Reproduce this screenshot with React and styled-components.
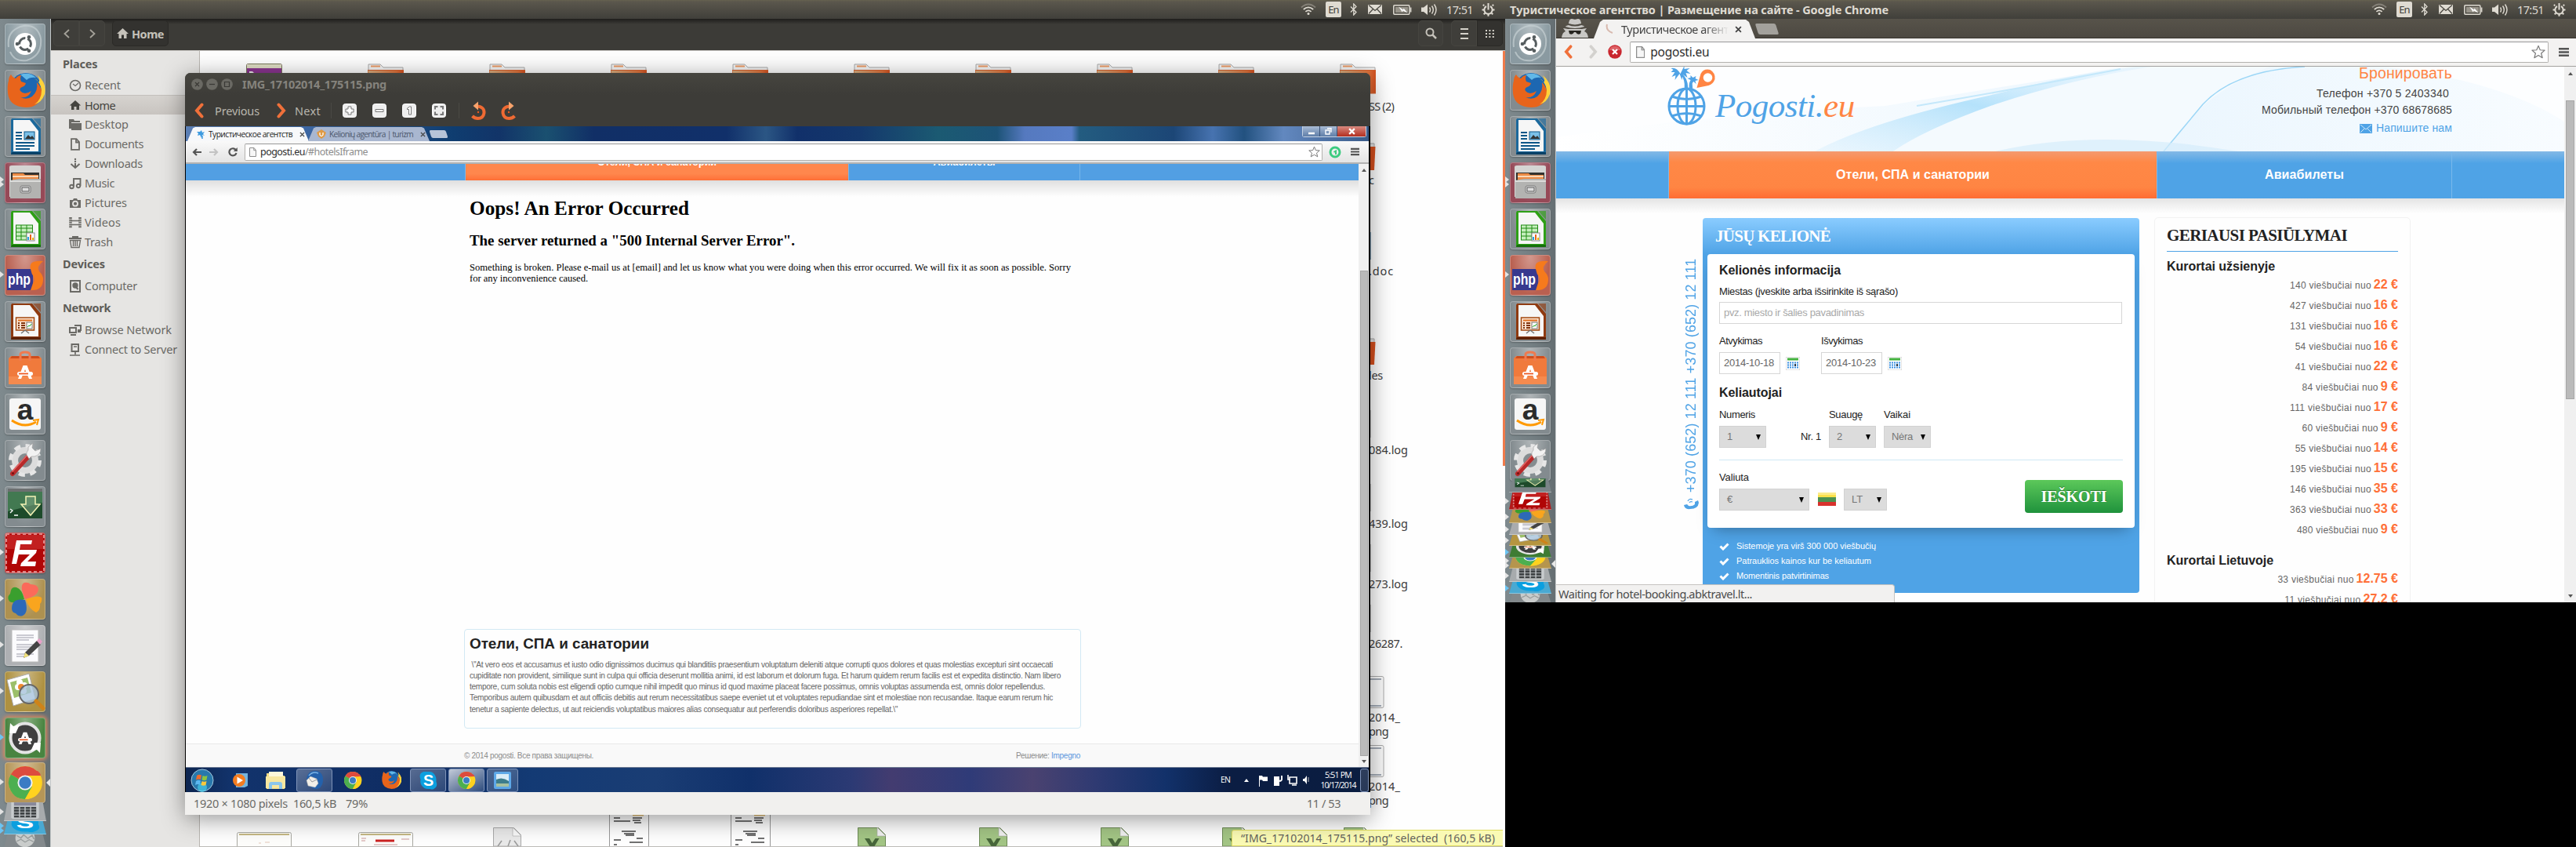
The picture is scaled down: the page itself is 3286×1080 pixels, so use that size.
import React, { useLayoutEffect, useRef, useState } from "react";
import styled, { createGlobalStyle, css } from "styled-components";

const UI = `"Noto Sans", "Open Sans", sans-serif`;
const ARIAL = `"Liberation Sans", Arial, sans-serif`;
const TIMES = `"Liberation Serif", "Times New Roman", serif`;
const BLUE = "#4fa3e6";
const ORANGE = "#ff8543";

const Global = createGlobalStyle`
  * { box-sizing: border-box; }
  body { margin: 0; background: #000; overflow: hidden; font-family: ${UI}; }
  svg { display: block; flex: none; }
  h1, h2, h3, p { margin: 0; }
`;

/* Tracks a line of text so that it takes exactly the given width. */
const FitSpan = styled.span`
  display: inline-block;
  flex: none;
  white-space: pre;
`;
function Fit({ w, children }) {
  const ref = useRef(null);
  const [track, setTrack] = useState(0);
  useLayoutEffect(() => {
    const el = ref.current;
    const n = el.textContent.length;
    setTrack((w - el.getBoundingClientRect().width) / n);
  }, [w]);
  return <FitSpan ref={ref} style={{ letterSpacing: `${track}px` }}>{children}</FitSpan>;
}

/* ---------- desktop ---------- */
const Desktop = styled.div`
  display: flex;
  align-items: flex-start;
  width: 3286px;
  height: 1080px;
  background: #000;
  overflow: hidden;
`;
const Monitor = styled.section`
  position: relative;
  display: flex;
  flex-direction: column;
  flex: none;
  width: ${(p) => p.$w}px;
  height: ${(p) => p.$h}px;
  overflow: hidden;
  background: #6d777a;
`;
const MonitorBody = styled.div`
  display: flex;
  flex: 1;
  min-height: 0;
`;
const Panel = styled.header`
  display: flex;
  align-items: center;
  justify-content: space-between;
  height: 24px;
  flex: none;
  padding: 0 7px 0 6px;
  background: linear-gradient(#66624f 0, #5b574d 2px, #403f3a 100%);
  color: #dfdbd2;
`;
const PanelTitle = styled.div`
  font: bold 14.5px/24px ${UI};
`;
const Tray = styled.div`
  position: relative;
  display: flex;
  align-items: center;
  height: 24px;
  font: 14.5px/24px ${UI};
`;
const Slot = styled.span`
  display: flex;
  flex: none;
  justify-content: center;
  width: ${(p) => p.$w}px;
`;
const Lang = styled.span`
  width: 20px;
  height: 20px;
  border-radius: 2px;
  background: #dfdbd2;
  color: #3f3e39;
  font: 13px/20px ${UI};
  letter-spacing: -0.8px;
  text-align: center;
`;

function PanelTray() {
  return (
    <Tray>
      <Slot $w={28}>
        <svg width="20" height="16" viewBox="0 0 20 16" fill="none" stroke="#dfdbd2" strokeWidth="1.7">
          <path d="M1 5.5q9-8 18 0" opacity=".35" />
          <path d="M3.8 8q6.2-5.4 12.4 0" /><path d="M6.4 10.8q3.6-3 7.2 0" />
          <circle cx="10" cy="13.6" r="1.5" fill="#dfdbd2" stroke="none" />
        </svg>
      </Slot>
      <Slot $w={36}><Lang>En</Lang></Slot>
      <Slot $w={16}>
        <svg width="10" height="16" viewBox="0 0 10 16" fill="none" stroke="#dfdbd2" strokeWidth="1.3"><path d="M1 4.5l7 7L4.8 15V1L8 4.4 1 11.5" /></svg>
      </Slot>
      <Slot $w={38}>
        <svg width="18" height="12" viewBox="0 0 18 12"><path d="M0 0h18v12H0z" fill="#dfdbd2" /><path d="M1 .5l8 7 8-7M1 11.5l5.5-6M17 11.5l-5.5-6" fill="none" stroke="#47453f" strokeWidth="1.2" /></svg>
      </Slot>
      <Slot $w={32}>
        <svg width="24" height="13" viewBox="0 0 24 13"><rect x=".8" y=".8" width="20" height="11.4" rx="1" fill="none" stroke="#dfdbd2" strokeWidth="1.5" /><path d="M22.6 3.5v6" stroke="#dfdbd2" strokeWidth="1.6" /><path d="M3 3h16v7H3z" fill="#98948a" /><path d="M7 2.5l6 4 .5-2 5 6-6-3-.6 2z" fill="#fff" /></svg>
      </Slot>
      <Slot $w={36}>
        <svg width="20" height="17" viewBox="0 0 20 17"><path d="M0 5.5h3l5-4v13.500l-5-4H0z" fill="#dfdbd2" /><path d="M10.500 5.500q2 3 0 6M13.500 3.500q3.600 5 0 10M16.500 1.500q5 7 0 14" fill="none" stroke="#dfdbd2" strokeWidth="1.4" /></svg>
      </Slot>
      <Slot $w={42}><Fit w={34}>17:51</Fit></Slot>
      <Slot $w={30}>
        <svg width="17" height="17" viewBox="0 0 17 17" fill="none" stroke="#dfdbd2"><path d="M6 4a5.200 5.200 0 1 0 5 0" strokeWidth="2" /><path d="M8.500 0v8.500" strokeWidth="2" /><path d="M3.300 3.300L1.800 1.900M13.700 3.300l1.500-1.400M3 8.500H.5M14 8.500h2.500M4.300 12.700l-1.600 1.600M12.700 12.700l1.600 1.600M8.500 14v2.800" strokeWidth="2" /></svg>
      </Slot>
    </Tray>
  );
}

/* ---------- launcher ---------- */
const Dock = styled.nav`
  flex: none;
  width: 65px;
  padding-top: 6px;
  overflow: hidden;
  background: linear-gradient(90deg, #7f8a8e, #737e82 55%, #656e72);
  border-right: 1px solid #c3c7c8;
`;
const DockSlot = styled.div`
  position: relative;
  width: 64px;
  height: ${(p) => p.$h}px;
  padding-left: 6px;
`;
const Tile = styled.div`
  width: 52px;
  height: 52px;
  border-radius: 4px;
  border: 1px solid rgba(255, 255, 255, 0.28);
  background: radial-gradient(ellipse at 50% 0, rgba(255, 255, 255, 0.4), rgba(255, 255, 255, 0.06) 70%), ${(p) => p.$bg};
  box-shadow: ${(p) => (p.$glow ? "0 0 5px 2px #d9875c" : "0 1px 2px rgba(0,0,0,.25)")};
  svg { margin: -1px; }
`;
const Fold = styled.div`
  display: flex;
  align-items: flex-end;
  justify-content: center;
  width: 54px;
  margin-left: -1px;
  height: ${(p) => p.$h}px;
  overflow: hidden;
  background: ${(p) => p.$bg};
  clip-path: polygon(8% 0, 92% 0, 100% 100%, 0 100%);
  border-bottom: 1.500px solid rgba(255, 255, 255, 0.35);
`;
const Pip = styled.i`
  position: absolute;
  left: 0;
  top: ${(p) => p.$y}px;
  border: 4px solid transparent;
  border-right-width: 0;
  border-left: 5px solid ${(p) => p.$c || "#e4e4e4"};
`;
const Focus = styled.i`
  position: absolute;
  right: 0;
  top: ${(p) => p.$y}px;
  border: 5px solid transparent;
  border-left-width: 0;
  border-right-color: #e8e8e8;
`;

const docPage = (c, dark, inner) => (
  <>
    <path d="M9 3h26l11 13v33H8V5z" fill={c} />
    <path d="M36 3h10v11z" fill={c} opacity=".65" />
    <path d="M9 46h37v3H8z" fill={dark} />
    <path d="M11 5h21l11 14v26H11z" fill="#f6f6f6" />
    {inner}
  </>
);
const chromeArt = (
  <>
    <circle cx="26" cy="26" r="21" fill="#ffd21f" />
    <path d="M26 26L7.800 15.500A21 21 0 0 1 44.200 15.500z" fill="#dd4b3e" />
    <path d="M7.800 15.500A21 21 0 0 0 26 47l9-16-9-5z" fill="#4caf50" />
    <path d="M26 17h20q-1-4-4-6l-16 2z" fill="#dd4b3e" />
    <path d="M26 47a21 21 0 0 0 19.800-30H26l9.500 13z" fill="#ffd21f" />
    <circle cx="26" cy="26" r="9.600" fill="#f2f2f2" /><circle cx="26" cy="26" r="7.700" fill="#3b7cc4" />
  </>
);
const foxArt = (
  <>
    <circle cx="27" cy="24" r="20" fill="#1d67b1" />
    <path d="M20 6q12-4 20 4-8-1-12 3z" fill="#61b8e8" />
    <path d="M5 14q0-5 3-8 2 4 6 5 3-4 7-4-2 4 0 8l6 2q-1 4-5 5-4 2-2 5 5 6 14 0-4 10-14 8 8 4 15-1 8-7 6-18 8 8 6 18-4 14-20 14Q6 47 4 30 3 20 5 14z" fill="#e8641b" />
    <path d="M37 10q9 6 10 16 0 12-9 18 9-2 13-13 3-14-9-24 4 7 1 9-2-4-6-6z" fill="#ffd23a" />
  </>
);
const aLetter = (x, y, s) => (
  <g transform={`translate(${x} ${y}) scale(${s})`}>
    <path d="M-2.500-8h5L9 9H5L0-3-5 9h-4z" fill="#fff" />
    <rect x="-10" y="0" width="20" height="5" rx="2.500" fill="#fff" /><path d="M-8 1.600H4v1.800H-8z" fill="#ee5a24" />
  </g>
);
const skypeArt = (
  <>
    <path d="M14 5h14q10 0 15 10 3 6 2 14 5 12-6 18-4 2-9 0-14 2-21-9-4-6-2-14Q1 9 14 5z" fill="#0b9fdf" />
    <text x="26" y="39" fontFamily={ARIAL} fontWeight="bold" fontSize="38" fill="#fff" textAnchor="middle">S</text>
  </>
);

const ART = {
  dash: (
    <>
      <path d="M5 30Q2 8 24 3q18-2 22 16M46 19q2 22-18 28Q12 49 7 36" fill="none" stroke="#c6d0d3" strokeWidth="2" opacity=".7" />
      <circle cx="26" cy="26" r="14" fill="#fff" />
      <circle cx="26" cy="26" r="7.400" fill="none" stroke="#565d5f" strokeWidth="3" strokeDasharray="12.500 3" strokeDashoffset="-7" />
      <circle cx="16" cy="26" r="2.300" fill="#565d5f" /><circle cx="31" cy="17.300" r="2.300" fill="#565d5f" /><circle cx="31" cy="34.700" r="2.300" fill="#565d5f" />
    </>
  ),
  firefox: foxArt,
  writer: docPage("#1c699c", "#0a4166", (
    <>
      <path d="M14 21h8M14 25h8M14 29h8M14 34h24M14 38h24M14 42h18" stroke="#0d5788" strokeWidth="2" />
      <rect x="25" y="20" width="13" height="10" fill="#7bc0e8" stroke="#0d5788" /><path d="M26 29l4-5 3 3 2-2 3 4z" fill="#333" />
    </>
  )),
  files: (
    <>
      <path d="M6 6q0-2 3-2h34q3 0 3 2v38H6z" fill="#d5d5d3" /><path d="M8 13h36v12H8z" fill="#33322f" />
      <path d="M10 14h14l2 2h17v10H10z" fill="#ec8b45" /><path d="M10 18h33" stroke="#fff0dc" strokeWidth="1.500" />
      <path d="M7 23l11-2h28v25H7z" fill="#b3b3b1" /><path d="M7 23h39v2H7z" fill="#dcdcda" />
      <rect x="20" y="30" width="13" height="9" rx="2" fill="#e8e8e8" stroke="#777" /><rect x="22" y="32" width="9" height="5" fill="#ddd" stroke="#555" />
    </>
  ),
  calc: docPage("#2ea016", "#14700a", (
    <>
      <rect x="14.500" y="21" width="21" height="19" fill="#c6efbd" stroke="#1f8a12" /><path d="M14 25h22M14 30h22M14 35h22M21 21v19M28 21v19" stroke="#1f8a12" />
      <rect x="28" y="31" width="10" height="10" fill="#fff" stroke="#888" /><path d="M30 40v-4" stroke="#26a3e0" strokeWidth="2" /><path d="M33 40v-7" stroke="#e8641b" strokeWidth="2" /><path d="M36 40v-3" stroke="#f0b400" strokeWidth="2" />
    </>
  )),
  php: (
    <>
      <path d="M3 18h33v27H3z" fill="#38398e" />
      <text x="4" y="38" fontFamily={ARIAL} fontWeight="bold" fontSize="21" textLength="29" lengthAdjust="spacingAndGlyphs" fill="#fff">php</text>
      <path d="M49 8Q30 6 33 18q1 6 4 10 2 5-1 8l-3 9q16 1 16-14 0-5-5-10-4-6 5-13z" fill="#f67a1c" />
    </>
  ),
  impress: docPage("#8f3a10", "#5c2103", (
    <>
      <rect x="14.500" y="21" width="23" height="16" fill="#fbe4d2" stroke="#a3480f" strokeWidth="1.500" /><path d="M17 24.500h18" stroke="#e07020" strokeWidth="2" />
      <path d="M17 28h2M17 31h2M17 34h2M21 28h5M21 31h5M21 34h5" stroke="#83340a" strokeWidth="2" /><rect x="28" y="27" width="7" height="8" fill="#fff" stroke="#777" /><path d="M29 33l2-2 1 1 2-3" stroke="#2a2" fill="none" />
      <path d="M26 37l-5 4M26 37l5 4" stroke="#777" strokeWidth="1.500" />
    </>
  )),
  store: (
    <>
      <path d="M5 14l3-3h36l3 3v33H5z" fill="#f07a3c" /><path d="M7 14l2-3h34l2 3z" fill="#cf4d1d" /><path d="M5 37h42v10H5z" fill="#f58a4e" />
      <path d="M20 17V9q0-3 6-3t6 3v8" fill="none" stroke="#ef7a4f" strokeWidth="3" />{aLetter(26, 31, 1)}
    </>
  ),
  amazon: (
    <>
      <rect x="6" y="6" width="40" height="40" rx="3" fill="#f6f6f6" />
      <text x="26" y="33" fontFamily={ARIAL} fontWeight="bold" fontSize="37" fill="#2b2b2b" textAnchor="middle">a</text>
      <path d="M9 34q16 11 31 2" fill="none" stroke="#ff9900" strokeWidth="3" /><path d="M36 34l7-1-2 7" fill="none" stroke="#ff9900" strokeWidth="2" />
    </>
  ),
  settings: (
    <>
      <circle cx="26" cy="26" r="13" fill="none" stroke="#dcdcdc" strokeWidth="8" /><circle cx="26" cy="26" r="18.500" fill="none" stroke="#e6e6e6" strokeWidth="5" strokeDasharray="8 6.530" />
      <circle cx="26" cy="26" r="8.500" fill="#858c8f" />
      <path d="M10 43L31 20" stroke="#b82a2a" strokeWidth="6" strokeLinecap="round" /><path d="M9.500 40.500L29 19" stroke="#e46a6a" strokeWidth="1.300" />
      <path d="M28 19q-1-3 2-6l0-4 6-5-1 6 4 4 7-3q0 8-8 10l-4 0-3 3z" fill="#f2f2f2" stroke="#999" strokeWidth=".6" /><circle cx="10.500" cy="42.500" r="1.500" fill="#711" />
    </>
  ),
  terminal: (
    <>
      <path d="M4 7h44v34H4z" fill="#1d4a2a" /><path d="M4 7h44v14L4 32z" fill="#4f8a5f" opacity=".75" /><path d="M4 3h44v4H4z" fill="#6c6f70" />
      <path d="M27 13h12v10h6L33 37 21 23h6z" fill="#79a07f" fillOpacity=".6" stroke="#f4f3b5" strokeWidth="1.500" />
      <path d="M7 29l3 2-3 3M12 37h5" fill="none" stroke="#fff" strokeWidth="1.300" />
    </>
  ),
  fz: (
    <>
      <rect x="2" y="2" width="48" height="48" fill="#b00606" stroke="#d88" strokeWidth="2" strokeDasharray="4 3" />
      <path d="M3 3h46v18H3z" fill="#d43a3a" opacity=".5" />
      <path d="M9 40l6-30h20l-1 5H20l-1 7h22l-1 4-11 11h11l-1 6H20l1-4 11-11H17.800L15 40z" fill="#fff" />
    </>
  ),
  clover: (
    <>
      <path d="M26 26Q18 8 25 5q5-1 8 2 9 0 10 6 0 9-17 13z" fill="#fb6a5a" />
      <path d="M25 26Q8 34 5 27q-2-4 2-8 1-10 8-8 7 2 10 15z" fill="#3a9f2e" />
      <path d="M26 27Q9 24 9 38q0 5 5 6 4 5 9 3 8-4 3-20z" fill="#2d69b8" />
      <path d="M27 26q16-6 20-2 1 5-2 8 1 8-5 11-9-4-13-17z" fill="#f9a51e" />
    </>
  ),
  notes: (
    <>
      <path d="M9 6h34v41H9z" fill="#fbfbfd" stroke="#b9b9b9" /><path d="M15 13h22M15 16h22M15 19h16M15 25h22M15 28h22M15 31h20M15 37h22M15 40h12" stroke="#9a9aa8" />
      <path d="M26 35l15-15 5 5-15 14-7 3z" fill="#444" /><path d="M41 20l3-3 4 4-3 4z" fill="#e8a0c8" /><path d="M26 35l5 4-7 3z" fill="#f2e27a" />
    </>
  ),
  viewer: (
    <>
      <path d="M3 11l28-8 8 32-28 9z" fill="#fff" stroke="#aaa" /><path d="M7 14l22-6 5 19-22 7z" fill="#9cbf6a" />
      <g fill="#fff"><circle cx="17" cy="20" r="4" /><circle cx="25" cy="18" r="4" /><circle cx="19" cy="14" r="4" /><circle cx="24" cy="25" r="4" /></g><circle cx="21" cy="20" r="4" fill="#ee8a2e" />
      <circle cx="31" cy="29" r="12" fill="#a8c3dc" fillOpacity=".8" stroke="#666" strokeWidth="2" /><path d="M40 38l9 9" stroke="#cf8318" strokeWidth="5" strokeLinecap="round" />
    </>
  ),
  updater: (
    <>
      <circle cx="26" cy="26" r="18.500" fill="#3f3f3f" stroke="#e4e4e4" strokeWidth="4" />
      <path d="M6 20l1-13 4 4 8-2-5 11z" fill="#fff" /><path d="M46 32l-1 13-4-4-8 2 5-11z" fill="#fff" />{aLetter(26, 26, 0.9)}
    </>
  ),
  chrome: chromeArt,
  keypad: (
    <>
      <rect x="6" y="4" width="40" height="44" rx="3" fill="#c8ccce" /><rect x="10" y="8" width="32" height="8" fill="#889" />
      <rect x="10" y="19" width="32" height="26" fill="#3e4244" /><path d="M10 25h32M10 32h32M10 39h32M18 19v26M26 19v26M34 19v26" stroke="#c8ccce" strokeWidth="1.500" />
    </>
  ),
  skype: skypeArt,
  trash: (
    <>
      <ellipse cx="26" cy="30" rx="14" ry="22" fill="#c9cccb" /><path d="M14 24l6 6 4-8 6 9 6-8 3 10M14 38l6-5 6 7 6-6 6 5" stroke="#979c9c" fill="none" strokeWidth="2" />
    </>
  ),
};

const DOCK_LEFT = [
  { art: "dash", bg: "#83949b" },
  { art: "firefox", bg: "#7b8488" },
  { art: "writer", bg: "#7b8488" },
  { art: "files", bg: "#8f3e4d", pips: 2 },
  { art: "calc", bg: "#7b8488" },
  { art: "php", bg: "#b55645", pips: 1 },
  { art: "impress", bg: "#7b8488" },
  { art: "store", bg: "#7b8488" },
  { art: "amazon", bg: "#7b8488" },
  { art: "settings", bg: "#7b8488" },
  { art: "terminal", bg: "#7b8488" },
  { art: "fz", bg: "#b31a1a", pips: 1 },
  { art: "clover", bg: "#a98a45", pips: 1 },
  { art: "notes", bg: "#a9abae", pips: 1 },
  { art: "viewer", bg: "#a98a35", pips: 1 },
  { art: "updater", bg: "#3e7c34", pips: 1, c: "#6cc4f2", glow: true, h: 57 },
  { art: "chrome", bg: "#b18f4d", pips: 1, focus: true, h: 51 },
  { art: "keypad", bg: "#a7abad", fold: 24, pips: 1 },
  { art: "skype", bg: "#4aa9d2", fold: 17, pips: 2, c: "#6cc4f2" },
  { art: "trash", bg: "#83898c", fold: 17 },
];
const DOCK_RIGHT = [
  ...DOCK_LEFT.slice(0, 9),
  { art: "settings", bg: "#7b8488", h: 49 },
  { art: "terminal", bg: "#7b8488", fold: 18 },
  { art: "fz", bg: "#b31a1a", fold: 22, pips: 1 },
  { art: "clover", bg: "#b5954d", fold: 17, pips: 1 },
  { art: "notes", bg: "#a9abae", fold: 15, pips: 1 },
  { art: "viewer", bg: "#b59540", fold: 14, pips: 1 },
  { art: "updater", bg: "#3e7c34", fold: 15, pips: 1, c: "#6cc4f2" },
  { art: "chrome", bg: "#b5954d", fold: 14, pips: 2, focus: true },
  { art: "keypad", bg: "#a7abad", fold: 17, pips: 1 },
  { art: "skype", bg: "#4aa9d2", fold: 15, pips: 1, c: "#6cc4f2" },
  { art: "trash", bg: "#83898c", fold: 13 },
];
function Launcher({ items }) {
  return (
    <Dock>
      {items.map((it) => {
        const mid = (it.fold || 50) / 2 - 4;
        return (
          <DockSlot key={it.art} $h={it.fold || it.h || 59}>
            {it.fold ? (
              <Fold $h={it.fold} $bg={it.bg}>
                <svg width="46" height="27" viewBox="0 0 52 52" preserveAspectRatio="none">{ART[it.art]}</svg>
              </Fold>
            ) : (
              <Tile $bg={it.bg} $glow={it.glow}><svg width="52" height="52" viewBox="0 0 52 52">{ART[it.art]}</svg></Tile>
            )}
            {it.pips === 1 && <Pip $y={mid} $c={it.c} />}
            {it.pips === 2 && <><Pip $y={mid - 3} $c={it.c} /><Pip $y={mid + 3} $c={it.c} /></>}
            {it.focus && <Focus $y={mid} />}
          </DockSlot>
        );
      })}
    </Dock>
  );
}

/* ---------- file manager ---------- */
const FilesWin = styled.div`
  display: flex;
  flex-direction: column;
  flex: 1;
  min-width: 0;
  background: #fff;
`;
const FilesBar = styled.div`
  display: flex;
  align-items: center;
  height: 41px;
  flex: none;
  padding: 0 3px 3px 3px;
  border-bottom: 1px solid #c9c7c3;
  background: linear-gradient(#1f1e1c, #3c3b37 7px);
`;
const BarButton = styled.div`
  display: flex;
  align-items: center;
  justify-content: center;
  gap: 4px;
  width: ${(p) => p.$w}px;
  height: 33px;
  margin-left: ${(p) => p.$ml || 0}px;
  border: 1px solid ${(p) => (p.$on ? "#2b2a27" : "#464540")};
  border-radius: ${(p) => p.$r || "5px"};
  background: ${(p) => (p.$on ? "#33322f" : "#3f3e3a")};
  color: #c5c2ba;
  font: bold 14.5px/30px ${UI};
`;
const Grow = styled.div`flex: 1;`;
const FilesBody = styled.div`
  display: flex;
  flex: 1;
  min-height: 0;
`;
const Sidebar = styled.aside`
  width: 190px;
  flex: none;
  padding-top: 3px;
  background: #e6e5e3;
  border-right: 1px solid #b9b6b1;
`;
const Place = styled.div`
  display: flex;
  align-items: center;
  gap: 4px;
  height: 25px;
  padding-left: 23px;
  color: ${(p) => (p.$on ? "#45443f" : "#6b6a66")};
  font: 14.5px/25px ${UI};
  ${(p) => p.$on && css`background: linear-gradient(#d6d3cf, #c8c4c0); border-top: 1px solid #c3c0bc;`}
`;
const PlaceHead = styled.div`
  height: 28px;
  padding: ${(p) => (p.$first ? 0 : 2)}px 0 0 15px;
  margin-bottom: ${(p) => (p.$first ? 0 : 3)}px;
  color: #5d5c58;
  font: bold 14.5px/26px ${UI};
`;
const G = "#6b6a66";
const PLACE_ICONS = {
  Recent: <><circle cx="8" cy="8" r="6.500" fill="none" stroke={G} strokeWidth="1.600" /><path d="M5 6l3 2.500L12 5" fill="none" stroke={G} strokeWidth="1.200" /></>,
  Home: <path d="M8 2L.8 8.500H3V14h3.500v-4h3v4H13V8.500h2.200z" fill="#45443f" />,
  Desktop: <><path d="M0 1h6l1 2h7v2H3v8H0z" fill={G} /><path d="M3 6h13v9H3z" fill={G} /></>,
  Documents: <path d="M3 1.200h6.500L13 5v9.800H3zM9 1v4.500h4" fill="none" stroke={G} strokeWidth="1.800" />,
  Downloads: <><path d="M2.500 8L8 13l5.500-5M8 13V7" fill="none" stroke={G} strokeWidth="2" /><circle cx="8" cy="2" r="1.200" fill={G} /><circle cx="8" cy="5" r="1.200" fill={G} /></>,
  Music: <path d="M6 12V2h8.500v9M5.800 12a2.300 2.300 0 1 1-4.600 0 2.300 2.300 0 0 1 4.600 0zM14.300 11a2.300 2.300 0 1 1-4.600 0 2.300 2.300 0 0 1 4.600 0z" fill="none" stroke={G} strokeWidth="1.900" />,
  Pictures: <><path d="M1 4h4l1-2h4l1 2h4v10H1z" fill={G} /><circle cx="8" cy="8.700" r="3" fill="none" stroke="#e6e5e3" strokeWidth="1.800" /></>,
  Videos: <><path d="M2 1v14M14 1v14" stroke={G} strokeWidth="3.500" strokeDasharray="2 .8" /><path d="M3 5.500h10M3 10.500h10" stroke={G} strokeWidth="1.500" /></>,
  Trash: <><path d="M0 3h16M4 1h8" stroke={G} strokeWidth="1.800" /><path d="M1.500 5.500L3 14.500h10l1.500-9zM5.500 6v7M8 6v7M10.500 6v7" fill="none" stroke={G} strokeWidth="1.400" /></>,
  Computer: <><rect x="2" y="1" width="12" height="14" fill="none" stroke={G} strokeWidth="2" /><circle cx="8" cy="7" r="3.700" fill={G} /><path d="M8 8l3.500 4" stroke={G} strokeWidth="2" /></>,
  "Browse Network": <><path d="M1 5h8v6H1z" fill="none" stroke={G} strokeWidth="2" /><path d="M2 14h7M7 2h8v6h-4M11 10h4" fill="none" stroke={G} strokeWidth="2" /></>,
  "Connect to Server": <><rect x="3.500" y="1" width="8.500" height="9" fill="none" stroke={G} strokeWidth="2" /><path d="M6 4h4M8 10v4M1 15h13" stroke={G} strokeWidth="1.700" /></>,
};
const PLACES = [
  { head: "Places", w: 44.5, items: [["Recent", 46], ["Home", 39], ["Desktop", 56], ["Documents", 75], ["Downloads", 74], ["Music", 38], ["Pictures", 54], ["Videos", 46], ["Trash", 36]] },
  { head: "Devices", w: 54, items: [["Computer", 67]] },
  { head: "Network", w: 61, items: [["Browse Network", 111], ["Connect to Server", 118]] },
];
const IconView = styled.main`
  position: relative;
  flex: 1;
  display: flex;
  flex-direction: column;
  justify-content: space-between;
  overflow: hidden;
  background: #fefefe;
`;
const FolderRow = styled.div`
  display: flex;
  gap: 109px;
  height: 57px;
  padding: 16px 0 0 59px;
`;
const Strip = styled.div`
  flex: 1;
  padding-left: 1491px;
`;
const FileCell = styled.div`
  padding-top: ${(p) => p.$gap}px;
  color: #3c3c3c;
  font: 14.5px/18px ${UI};
  svg { margin-bottom: ${(p) => p.$mb}px; }
`;
const BottomRow = styled.div`
  display: flex;
  align-items: flex-end;
  gap: 85px;
  height: 41px;
  padding-left: 47px;
  border-bottom: 1px solid #bdbbb8;
`;
const BottomCell = styled.div`
  display: flex;
  justify-content: center;
  width: 70px;
`;
const ScrollMark = styled.div`
  width: 3px;
  height: 529px;
  flex: none;
  background: #f07b4b;
`;
const Selected = styled.div`
  position: absolute;
  right: -2px;
  bottom: 1px;
  height: 21px;
  width: 348px;
  padding-left: 11px;
  border: 1px solid #dedb5e;
  border-radius: 3px 0 0 0;
  background: #fafab4;
  color: #63625c;
  font: 14px/19px ${UI};
`;
const Folder = () => (
  <svg width="46" height="40" viewBox="0 0 46 40">
    <path d="M1 12V1h15l4 4h25v7z" fill="#f4f4f4" stroke="#aaa" /><path d="M4 3.500h12" stroke="#eb9a66" strokeWidth="2" />
    <path d="M0 8.500h46V38H1z" fill="url(#fold)" stroke="#d5622f" />
    <defs><linearGradient id="fold"><stop offset="0" stopColor="#dcb182" /><stop offset=".8" stopColor="#e0733c" /><stop offset="1" stopColor="#d8501e" /></linearGradient></defs>
  </svg>
);
const EDGE = {
  folder: (h) => <><path d="M0 1h7v6H0z" fill="#e5e5e5" stroke="#aaa" /><path d={`M0 5h8.500L7 ${h}H0z`} fill="#d8501e" /></>,
  blue: (h) => <path d={`M0 2h2.500v${h - 2}H0z`} fill="#2f6f9c" />,
  page: (h) => <path d={`M0 1h2v${h - 2}H0`} fill="#eee" stroke="#999" />,
  shot: (h) => <><rect x="-20" y=".5" width="39" height={h - 1} rx="2" fill="#fafafa" stroke="#aaa" /><path d="M0 4h16M0 38h16" stroke="#4a5a70" /><path d="M0 18h2v5H0z" fill="#357" /></>,
};
const STRIP = [
  { gap: 4, lines: [["SS (2)", 32]] },
  { gap: 38, icon: "folder", h: 35, mb: 3, lines: [["c", 7]] },
  { gap: 56, icon: "blue", h: 37, mb: 5, lines: [[".doc", 32]] },
  { gap: 77, icon: "folder", h: 34, mb: 4, lines: [["les", 18]] },
  { gap: 35, icon: "page", h: 37, mb: 5, lines: [["084.log", 50]] },
  { gap: 34, icon: "page", h: 37, mb: 5, lines: [["439.log", 50]] },
  { gap: 17, icon: "page", h: 37, mb: 5, lines: [["273.log", 50]] },
  { gap: 17, icon: "page", h: 37, mb: 4, lines: [["26287.", 43]] },
  { gap: 33, icon: "shot", h: 41, mb: 2, lines: [["2014_", 40], ["png", 25]] },
  { gap: 9, icon: "shot", h: 41, mb: 2, lines: [["2014_", 40], ["png", 25]] },
];
const Thumb = ({ red }) => (
  <svg width="70" height="18" viewBox="0 0 70 18"><rect x=".5" y=".5" width="69" height="30" rx="2" fill="#fdfdfb" stroke="#a9a9a2" /><path d="M3 3h64" stroke="#b3a25c" strokeWidth="1.500" />{red ? <><path d="M22 11h24" stroke="#c22" strokeWidth="3" /><path d="M4 8h6M4 11h5M55 9h10M20 16h30" stroke="#c99" /></> : <path d="M28 14h3M36 13h6" stroke="#e3c7b8" />}</svg>
);
const Report = () => (
  <svg width="51" height="40" viewBox="0 0 51 40"><path d="M.5 0v40M50.500 0v40" stroke="#999" /><path d="M1 0h49v40H1z" fill="#fff" /><path d="M6 4h8M6 8h21M30 4h12M30 7h10M32 10h9M16 21h18M19 24h13M21 26h11M6 32h9M26 35h17M35 30h8M6 38h4" stroke="#444" strokeWidth="1.600" /><path d="M30 .8h14" stroke="#d9a53a" /></svg>
);
const Sheet = () => (
  <svg width="36" height="24" viewBox="0 0 36 24"><path d="M.5 24V.5h26l9 9V24z" fill="#a3c585" stroke="#6e8b57" /><path d="M25 0v11h11z" fill="#f2f2f2" stroke="#aaa" strokeWidth=".6" /><path d="M9 14h6l3.500 6 4-6h5l-6 10h-6z" fill="#47663a" /></svg>
);
const Code = () => (
  <svg width="36" height="24" viewBox="0 0 36 24"><path d="M.5 24V.5h26l9 9V24z" fill="#e9e9e9" stroke="#aaa" /><path d="M25 0v11h11z" fill="#fafafa" stroke="#aaa" strokeWidth=".6" /><path d="M11 17l-5 7M22 16l-3 8M27 17l5 7" stroke="#999" strokeWidth="1.500" /></svg>
);

/* ---------- image viewer ---------- */
const Viewer = styled.div`
  position: absolute;
  left: 236px;
  top: 93px;
  display: flex;
  flex-direction: column;
  width: 1512px;
  height: 946px;
  border-radius: 7px 7px 0 0;
  background: #3d3c38;
  box-shadow: 0 5px 30px rgba(0, 0, 0, 0.42);
`;
const TitleBar = styled.div`
  display: flex;
  align-items: center;
  gap: 4px;
  height: 28px;
  padding-left: 8px;
  color: #85837d;
  font: bold 14.5px/28px ${UI};
  border-radius: 7px 7px 0 0;
  background: linear-gradient(#46453f, #3d3c38);
  svg:last-of-type { margin-right: 8px; }
`;
const ViewTools = styled.div`
  display: flex;
  align-items: center;
  height: 40px;
  padding-left: 12px;
  color: #b9b6ae;
  font: 14.5px/40px ${UI};
`;
const Sep = styled.i`
  width: 1px;
  height: 20px;
  margin: 0 ${(p) => p.$r}px 0 ${(p) => p.$l}px;
  background: #4a4944;
`;
const Space = styled.i`width: ${(p) => p.$w}px; flex: none;`;
const Shot = styled.div`
  display: flex;
  flex-direction: column;
  height: 849px;
  margin: 0 2px 0 1px;
  box-shadow: -1px 0 #000, 2px 0 #000;
  background: #fff;
  overflow: hidden;
`;
const ViewStatus = styled.div`
  display: flex;
  align-items: center;
  height: 29px;
  padding: 0 38px 0 11px;
  background: #f1f0ee;
  color: #6a6a67;
  font: 14.500px/29px ${UI};
`;
const ToolKey = ({ children }) => (
  <svg width="18" height="18" viewBox="0 0 18 18"><rect x=".5" y=".5" width="17" height="17" rx="3" fill="#eee" stroke="#fff" />{children}</svg>
);
const Chevron = ({ flip, c = "#f0703a", w = 12, h = 20 }) => (
  <svg width={w} height={h} viewBox="0 0 12 20"><path d={flip ? "M2.500 2.500L9 10l-6.500 7.500" : "M9.500 2.500L3 10l6.500 7.500"} fill="none" stroke={c} strokeWidth="4" strokeLinecap="round" /></svg>
);
const Rotate = ({ flip }) => (
  <svg width="20" height="24" viewBox="0 0 20 24"><g transform={flip ? "translate(20 0) scale(-1 1)" : undefined}><path d="M7 6.500q10 .5 9.500 8.500-1 7-8 7-4 0-7-3" fill="none" stroke="#ef6a33" strokeWidth="4" /><path d="M2.500 6L9 .5v11z" fill="#f7a36c" /><circle cx="9" cy="14" r="1.200" fill="#e85a22" /></g></svg>
);

const WinTabs = styled.div`
  display: flex;
  align-items: flex-end;
  height: 19px;
  flex: none;
  padding-left: 2px;
  background: linear-gradient(90deg, #5b7fb5 0, #3d67a3 150px, #0f3d70 340px, #123468 400px, #1a5070 460px, #112f66 520px, #11306a 690px, #2b5684 740px, #11306a 780px, #14386c 860px, #1b5a72 960px, #1d5377 1035px, #5579bf 1070px, #5a7fc8 1130px, #235c80 1140px, #1c4676 1260px, #4773b0 1310px, #22517f 1350px, #6288bf 1400px, #3b5c8a 100%);
`;
const WinTab = styled.div`
  display: flex;
  align-items: center;
  gap: 4px;
  width: ${(p) => p.$w}px;
  height: 18px;
  padding-left: 11px;
  margin-right: -1px;
  background: ${(p) => (p.$dim ? "#a9b7d0" : "#f7f8fa")};
  color: ${(p) => (p.$dim ? "#4b566b" : "#222")};
  clip-path: polygon(0 100%, 7px 8%, 10px 0, calc(100% - 10px) 0, calc(100% - 7px) 8%, 100% 100%);
  font: 10.200px/18px "Open Sans", ${UI};
`;
const NewTab = styled.i`
  width: ${(p) => p.$w}px;
  height: ${(p) => p.$h}px;
  margin: 0 0 4px 2px;
  background: ${(p) => p.$c};
  transform: skewX(18deg);
  border-radius: 2px;
`;
const WinButtons = styled.div`
  display: flex;
  align-self: flex-start;
  height: 14px;
  margin: 0 3px 0 auto;
  border: 1px solid #c5d2e3;
  border-top: 0;
  border-radius: 0 0 3px 3px;
  i { width: 22px; background: linear-gradient(#a9bcd6, #5f7ea8); border-right: 1px solid #3b5378; display: grid; place-items: center; }
  i:last-child { width: 36px; background: linear-gradient(#d98a80, #b32e1f); border: 0; }
`;
const WinTools = styled.div`
  display: flex;
  align-items: center;
  height: 29px;
  flex: none;
  padding: 0 12px 0 8px;
  border-bottom: 2px solid #b2b2b2;
  background: linear-gradient(#f9f9f9, #e4e4e4);
`;
const UrlBox = styled.div`
  display: flex;
  align-items: center;
  flex: 1;
  height: ${(p) => p.$h}px;
  padding: 0 ${(p) => p.$pr}px 0 ${(p) => p.$pl}px;
  border: 1px solid #b3b1ae;
  border-top-color: #999;
  border-radius: 2px;
  background: #fff;
  color: #2d2d2d;
  font: ${(p) => p.$fs}px/${(p) => p.$h - 2}px ${UI};
  em { color: #8d8d8d; font-style: normal; }
`;
const PageWithBar = styled.div`
  display: flex;
  flex: 1;
  min-height: 0;
`;
const ErrPage = styled.div`
  display: flex;
  flex-direction: column;
  flex: 1;
  background: #fefefe;
`;
const ErrNav = styled.div`
  display: flex;
  height: 21px;
  flex: none;
  background: #529fe3;
  overflow: hidden;
`;
const ErrTab = styled.div`
  display: flex;
  align-items: flex-start;
  justify-content: center;
  width: ${(p) => p.$w}px;
  height: 21px;
  border-right: 1px solid #77b5ea;
  background: ${(p) => (p.$hot ? "linear-gradient(#ff874d 60%, #ff6f37)" : "transparent")};
  color: #fff;
  font: bold 12.600px/14px ${ARIAL};
  span { margin-top: -9px; }
`;
const NavShade = styled.div`
  height: 21px;
  flex: none;
  margin-bottom: -21px;
  background: linear-gradient(rgba(0, 0, 0, 0.12), rgba(0, 0, 0, 0));
`;
const ErrText = styled.div`
  padding: 21px 0 0 362px;
  height: 572px;
  flex: none;
  color: #000;
  font: 12.600px/14px ${TIMES};
  h1 { font-size: 25.200px; line-height: 30px; }
  h2 { font-size: 18.900px; line-height: 22px; margin: 15px 0 16px; }
  p { height: 14px; }
`;
const AboutBox = styled.div`
  width: 787px;
  height: 127px;
  margin-left: 355px;
  flex: none;
  padding: 7px 0 0 6px;
  border: 1px solid #d2e9f4;
  border-radius: 4px;
  color: #666;
  font: 10.200px/14.150px ${ARIAL};
  h2 { color: #222; font-size: 18.900px; line-height: 22px; margin-bottom: 9px; }
  p { height: 14.150px; }
`;
const ErrFooter = styled.div`
  display: flex;
  justify-content: space-between;
  height: 30px;
  margin-top: auto;
  padding: 0 355px 0 355px;
  border-top: 1px solid #e8e8e8;
  background: #f9f9f9;
  color: #8d8d8d;
  font: 10px/30px ${ARIAL};
  b { font-weight: normal; color: #5d97dd; }
`;
const Scroll = styled.div`
  display: flex;
  flex-direction: column;
  align-items: center;
  width: ${(p) => p.$w}px;
  flex: none;
  padding: ${(p) => p.$w / 2 - 1}px 0;
  background: #f0f0f0;
`;
const Arrow = styled.i`
  border: 3.500px solid transparent;
  ${(p) => (p.$down ? "border-top: 4px solid #555; border-bottom: 0; margin-top: auto;" : "border-bottom: 4px solid #555; border-top: 0;")}
`;
const Thumbbar = styled.i`
  width: ${(p) => p.$w}px;
  height: ${(p) => p.$h}px;
  margin-top: ${(p) => p.$t}px;
  background: #bababa;
  border: 1px solid #a6a6a6;
`;
const TaskBar = styled.div`
  display: flex;
  align-items: center;
  height: 32px;
  flex: none;
  padding-left: 6px;
  border-top: 1px solid #6f7c94;
  background: linear-gradient(90deg, #0d2550 0, #12336c 60px, #0f2c62 300px, #133a74 440px, #1a3d74 600px, #10306a 720px, #2c3a74 850px, #433c70 900px, #2f3b78 1000px, #4a4270 1080px, #2f3a72 1160px, #12316a 1250px, #0b1d43 1330px, #0a1d40 100%);
  color: #fff;
`;
const Task = styled.div`
  display: flex;
  align-items: center;
  justify-content: center;
  width: ${(p) => p.$w}px;
  height: 30px;
  margin-right: ${(p) => p.$mr || 0}px;
  border-radius: 3px;
  ${(p) => p.$open && css`border: 1px solid #7f93b8; background: linear-gradient(150deg, rgba(255,255,255,${p.$open}), rgba(255,255,255,.12));`}
`;
const Clock = styled.div`
  width: 46px;
  text-align: center;
  font: 10.500px/13px "Open Sans", ${UI};
`;
const Doc = ({ s = 1 }) => (
  <svg width={9 * s} height={12 * s} viewBox="0 0 9 12"><path d="M.5.5H6L8.500 3.500v8h-8zM5.800.5v3.200h2.700" fill="#f7f7f7" stroke="#8e8e8e" /></svg>
);
const Star = ({ s }) => (
  <svg width={s} height={s} viewBox="0 0 20 20"><path d="M10 1.500l2.500 6 6.500.4-5 4.300 1.700 6.300L10 15l-5.700 3.500L6 12.200 1 7.900l6.500-.4z" fill="#fff" stroke="#777" strokeWidth="1.300" strokeLinejoin="round" /></svg>
);
const Menu = ({ s }) => (
  <svg width={s} height={s} viewBox="0 0 12 12"><path d="M0 2h12M0 6h12M0 10h12" stroke="#555" strokeWidth="2.300" /></svg>
);
const Cross = ({ s = 8, c = "#444", k = 1.600 }) => (
  <svg width={s} height={s} viewBox="0 0 8 8"><path d="M1 1l6 6M7 1L1 7" stroke={c} strokeWidth={k} /></svg>
);
const ABOUT = [
  [' \\"At vero eos et accusamus et iusto odio dignissimos ducimus qui blanditiis praesentium voluptatum deleniti atque corrupti quos dolores et quas molestias excepturi sint occaecati', 744],
  ["cupiditate non provident, similique sunt in culpa qui officia deserunt mollitia animi, id est laborum et dolorum fuga. Et harum quidem rerum facilis est et expedita distinctio. Nam libero", 754],
  ["tempore, cum soluta nobis est eligendi optio cumque nihil impedit quo minus id quod maxime placeat facere possimus, omnis voluptas assumenda est, omnis dolor repellendus.", 734],
  ["Temporibus autem quibusdam et aut officiis debitis aut rerum necessitatibus saepe eveniet ut et voluptates repudiandae sint et molestiae non recusandae. Itaque earum rerum hic", 744],
  ['tenetur a sapiente delectus, ut aut reiciendis voluptatibus maiores alias consequatur aut perferendis doloribus asperiores repellat.\\"', 546],
];

function ImageViewer() {
  return (
    <Viewer>
      <TitleBar>
        {["M5 5l5 5M10 5l-5 5", "M4 7.500h7", "M4.500 4.500h6v6h-6z"].map((d) => (
          <svg key={d} width="15" height="15" viewBox="0 0 15 15"><circle cx="7.500" cy="7.500" r="7.300" fill="#6a6963" /><path d={d} fill="none" stroke="#3a3935" strokeWidth="1.200" /></svg>
        ))}
        <Fit w={184}>IMG_17102014_175115.png</Fit>
      </TitleBar>
      <ViewTools>
        <Chevron /><Space $w={14} /><Fit w={57}>Previous</Fit><Space $w={22} />
        <Chevron flip /><Space $w={11} /><Fit w={33}>Next</Fit><Sep $l={13} $r={14} />
        <ToolKey><path d="M7 4h4v3h3v4h-3v3H7v-3H4V7h3z" fill="#fff" stroke="#777" /></ToolKey><Space $w={20} />
        <ToolKey><path d="M4 7.500h10v3H4z" fill="#fff" stroke="#777" /></ToolKey><Space $w={20} />
        <ToolKey><path d="M6.500 6l3-2h2v10h-3V7.500h-2z" fill="#fff" stroke="#777" /></ToolKey><Space $w={20} />
        <ToolKey><path d="M4 7.500V4h3.500M10.500 4H14v3.500M14 10.500V14h-3.500M7.500 14H4v-3.500" fill="none" stroke="#777" strokeWidth="2" /></ToolKey>
        <Sep $l={16} $r={15} /><Rotate /><Space $w={17} /><Rotate flip />
      </ViewTools>
      <Shot>
        <WinTabs>
          <WinTab $w={155}>
            <svg width="12" height="12" viewBox="0 0 12 12"><path d="M1 3l4 0 2-2 1 3 3-1-2 3 2 2-3-1-1 4-2-4-3 1 1-3z" fill="#3f9be0" /><path d="M8 8v4" stroke="#3f9be0" strokeWidth="1.500" /></svg>
            <Fit w={107}>Туристическое агентств</Fit><Space $w={1} /><Cross s={7} />
          </WinTab>
          <WinTab $w={155} $dim>
            <svg width="12" height="12" viewBox="0 0 12 12"><path d="M6 0l6 4-2 5-4 3-4-3-2-5z" fill="#df9a44" /><path d="M4 4v3q2 3 4 0V4" fill="none" stroke="#fff" strokeWidth="1.300" /></svg>
            <Fit w={107}>Kelionių agentūra | turizm</Fit><Space $w={1} /><Cross s={7} />
          </WinTab>
          <NewTab $w={21} $h={10} $c="#b7c4d8" />
          <WinButtons>
            <i><svg width="8" height="8" viewBox="0 0 8 8"><path d="M0 6h8" stroke="#fff" strokeWidth="2.500" /></svg></i>
            <i><svg width="9" height="9" viewBox="0 0 9 9"><path d="M3 .8h5v5M1 3h5v5H1z" fill="none" stroke="#fff" strokeWidth="1.400" /></svg></i>
            <i><Cross s={9} c="#fff" k={2} /></i>
          </WinButtons>
        </WinTabs>
        <WinTools>
          <svg width="12" height="10" viewBox="0 0 12 10"><path d="M12 5H2M6 1L2 5l4 4" fill="none" stroke="#555" strokeWidth="2.200" /></svg><Space $w={10} />
          <svg width="12" height="10" viewBox="0 0 12 10"><path d="M0 5h10M6 1l4 4-4 4" fill="none" stroke="#c3c3c3" strokeWidth="2.200" /></svg><Space $w={12} />
          <svg width="12" height="12" viewBox="0 0 12 12"><path d="M10 3.500A4.600 4.600 0 1 0 10.500 7" fill="none" stroke="#555" strokeWidth="2.200" /><path d="M11.800 0v5h-5z" fill="#555" /></svg><Space $w={9} />
          <UrlBox $h={22} $pl={5} $pr={2} $fs={12.5}>
            <Doc /><Space $w={5} /><Fit w={57}>pogosti.eu</Fit><em><Fit w={80}>/#hotelsIframe</Fit></em><Grow /><Star s={15} />
          </UrlBox>
          <Space $w={8} /><svg width="16" height="16" viewBox="0 0 16 16"><circle cx="8" cy="8" r="6" fill="none" stroke="#3dcb80" strokeWidth="3" /><path d="M9 11V6.500L6.500 8" fill="none" stroke="#3dcb80" strokeWidth="2" /></svg>
          <Space $w={12} /><Menu s={11} />
        </WinTools>
        <PageWithBar>
          <ErrPage>
            <ErrNav>
              <ErrTab $w={357} />
              <ErrTab $w={489} $hot><Fit w={152}>Отели, СПА и санатории</Fit></ErrTab>
              <ErrTab $w={295}><Fit w={79}>Авиабилеты</Fit></ErrTab>
            </ErrNav>
            <NavShade />
            <ErrText>
              <h1><Fit w={280}>Oops! An Error Occurred</Fit></h1>
              <h2><Fit w={415}>The server returned a "500 Internal Server Error".</Fit></h2>
              <p><Fit w={767}>Something is broken. Please e-mail us at [email] and let us know what you were doing when this error occurred. We will fix it as soon as possible. Sorry</Fit></p>
              <p><Fit w={151}>for any inconvenience caused.</Fit></p>
            </ErrText>
            <AboutBox>
              <h2><Fit w={229}>Отели, СПА и санатории</Fit></h2>
              {ABOUT.map(([t, w]) => <p key={w + t[0]}><Fit w={w}>{t}</Fit></p>)}
            </AboutBox>
            <ErrFooter>
              <Fit w={165}>© 2014 pogosti. Все права защищены.</Fit>
              <span><Fit w={45}>Решение: </Fit><b><Fit w={37}>Impegno</Fit></b></span>
            </ErrFooter>
          </ErrPage>
          <Scroll $w={13}><Arrow /><Thumbbar $w={10} $h={619} $t={126} /><Arrow $down /></Scroll>
        </PageWithBar>
        <TaskBar>
          <Task $w={30} $mr={17}>
            <svg width="30" height="30" viewBox="0 0 30 30"><circle cx="15" cy="15" r="14" fill="#2878ac" stroke="#a5c8dd" /><circle cx="15" cy="24" r="6" fill="#4dd8f2" opacity=".6" /><path d="M8 9q3-2 6-.5l-1 5.500q-3-1.300-6 .5z" fill="#ec6a2d" /><path d="M15.500 9q3 1.500 6 0l-1 5.500q-3 1.500-6 0z" fill="#8cc540" /><path d="M7 16q3-2 6-.5l-1 5q-3-1-6 .5z" fill="#5cb8f0" /><path d="M14.500 16q3 1.500 6 0l-1 5q-3 1.500-6 0z" fill="#fac83a" /></svg>
          </Task>
          <Task $w={32} $mr={13}>
            <svg width="21" height="20" viewBox="0 0 21 20"><path d="M5 1h15v16l-4 2H5z" fill="#74b4de" /><circle cx="9" cy="10" r="8" fill="#f47c20" /><path d="M6.500 5.500L14 10l-7.500 4.500z" fill="#fff" /></svg>
          </Task>
          <Task $w={34} $mr={9}>
            <svg width="28" height="24" viewBox="0 0 28 24"><path d="M2 3h8l2 3h13v17H2z" fill="#f0d984" /><path d="M5 1h18v8H5z" fill="#fdf7da" /><path d="M1 7h25v15H1z" fill="#f8e7a0" /><path d="M5 23v-6q0-3 3-3h11q3 0 3 3v6h-4v-5H9v5z" fill="#8cc6ec" /></svg>
          </Task>
          <Task $w={46} $mr={3} $open={0.3}>
            <svg width="24" height="25" viewBox="0 0 24 25"><path d="M2 12Q3 0 15 1q9 2 8 13-1 10-10 10-8-1-11-12z" fill="#2461ab" /><path d="M5 7q5-6 12-3" stroke="#7db4e6" strokeWidth="1.500" fill="none" /><path d="M2 13l5-5 8 3 2 6-4 5-9-2z" fill="#f2efe9" stroke="#aaa" strokeWidth=".5" /><path d="M5 10l4 5 6-3" fill="none" stroke="#999" /></svg>
          </Task>
          <Task $w={45} $mr={4}><svg width="24" height="24" viewBox="3 3 46 46">{chromeArt}</svg></Task>
          <Task $w={46} $mr={1}><svg width="25" height="25" viewBox="3 3 48 46">{foxArt}</svg></Task>
          <Task $w={46} $mr={3} $open={0.3}><svg width="25" height="26" viewBox="2 2 48 48">{skypeArt}</svg></Task>
          <Task $w={46} $mr={3} $open={0.75}><svg width="24" height="24" viewBox="3 3 46 46">{chromeArt}</svg></Task>
          <Task $w={40} $open={0.25}><svg width="22" height="22" viewBox="0 0 22 22"><rect width="22" height="22" rx="2" fill="#5da8e8" /><rect x="3" y="3" width="16" height="16" fill="#d9ecf8" /><path d="M3 10q8-4 16 2v7H3z" fill="#3d7d8c" /><path d="M3 15h16v4H3z" fill="#a7c1a0" /></svg></Task>
          <Grow />
          <Clock><Fit w={12}>EN</Fit></Clock>
          <svg width="84" height="18" viewBox="0 0 84 18"><path d="M1 11l3-4 3 4z" fill="#fff" /><path d="M20 17V3h4l1 1.500h6V10h-6l-1-1.500h-3V17z" fill="#fff" /><path d="M39 4h7v12h-7z" fill="#fff" /><path d="M44 4v5q4 2 5-1V3" fill="none" stroke="#fff" strokeWidth="2" /><path d="M59 5h9v8h-9zM57 2v6h3M62 15h6" fill="none" stroke="#fff" strokeWidth="1.600" /><path d="M76 7h2l3-4v11l-3-4h-2z" fill="#fff" /><path d="M83 5v6" stroke="#bbb" /></svg>
          <Space $w={14} />
          <Clock><Fit w={34}>5:51 PM</Fit><Fit w={45}>10/17/2014</Fit></Clock>
          <Space $w={5} /><Task $w={11} $open={0.15} />
        </TaskBar>
      </Shot>
      <ViewStatus>
        <Fit w={120}>1920 × 1080 pixels</Fit><Space $w={7} /><Fit w={55}>160,5 kB</Fit><Space $w={12} /><Fit w={28}>79%</Fit>
        <Grow /><Fit w={43}>11 / 53</Fit>
      </ViewStatus>
    </Viewer>
  );
}

/* ---------- browser on the second monitor ---------- */
const Browser = styled.div`
  display: flex;
  flex-direction: column;
  flex: 1;
  min-width: 0;
  position: relative;
  background: #fff;
`;
const TabBar = styled.div`
  display: flex;
  align-items: flex-end;
  height: 25px;
  flex: none;
  padding-left: 7px;
  background: linear-gradient(#57534a, #4d4942);
  border-bottom: 1px solid #37352f;
`;
const ActiveTab = styled.div`
  display: flex;
  align-items: center;
  width: 206px;
  height: 24px;
  margin: 0 0 -1px 7px;
  padding-left: 15px;
  background: #f3f2f1;
  color: #444;
  font: 14.500px/24px ${UI};
  clip-path: polygon(0 100%, 8px 12%, 12px 0, calc(100% - 12px) 0, calc(100% - 8px) 12%, 100% 100%);
`;
const FadeText = styled.div`
  width: 137px;
  overflow: hidden;
  mask-image: linear-gradient(90deg, #000 78%, transparent);
`;
const Tools = styled.div`
  display: flex;
  align-items: center;
  height: 36px;
  flex: none;
  padding: 0 9px 1px 10px;
  background: #f3f2f1;
  border-bottom: 1px solid #a3a19e;
`;
const Site = styled.div`
  flex: 1;
  min-width: 0;
  overflow: hidden;
  background: #fefefe;
`;
const SiteHead = styled.div`
  display: grid;
  height: 108px;
  > * { grid-area: 1 / 1; }
`;
const HeadRow = styled.div`
  display: flex;
  justify-content: space-between;
  padding: 0 143px 0 142px;
  z-index: 1;
`;
const Brand = styled.div`
  display: flex;
  gap: 9px;
  color: ${BLUE};
  font: italic 43px/50px ${TIMES};
  > div { padding-top: 25px; }
  b { font-weight: normal; color: ${ORANGE}; }
`;
const Contacts = styled.div`
  display: flex;
  flex-direction: column;
  align-items: flex-end;
  color: #444;
  font: 14px/21px ${ARIAL};
  strong { color: ${ORANGE}; font-weight: normal; font-size: 19.500px; line-height: 26px; margin-top: -5px; }
  strong + div { margin: 3px 4px 0 0; }
  a { display: flex; align-items: center; gap: 5px; margin-top: 2px; color: ${BLUE}; }
`;
const SiteNav = styled.nav`
  display: flex;
  height: 60px;
  background: linear-gradient(#84b9e6, ${BLUE} 15px);
`;
const NavCell = styled.div`
  width: ${(p) => p.$w}px;
  border-right: 1px solid #79b9ec;
  background: ${(p) => (p.$hot ? "linear-gradient(#f49a6f, #ff8846 14px, #ff8543 46px, #ff6c33)" : "transparent")};
  color: #fff;
  text-align: center;
  font: bold 16px/59px ${ARIAL};
`;
const Columns = styled.div`
  display: flex;
  align-items: flex-start;
  padding: 25px 0 0 162px;
  background: linear-gradient(#e4e4e4, #fefefe 19px);
`;
const PhoneRail = styled.div`
  display: flex;
  flex-direction: column;
  align-items: center;
  width: 21px;
  margin: 51px 4px 0 0;
  color: ${BLUE};
  div { writing-mode: vertical-rl; transform: rotate(180deg); font: 18px/21px ${ARIAL}; height: 299px; white-space: nowrap; letter-spacing: 0.1px; margin-bottom: 6px; }
`;
const Form = styled.section`
  width: 557px;
  height: 478px;
  padding: 0 6px;
  border-radius: 4px;
  background: linear-gradient(#8accff, ${BLUE} 46px);
  > h2 { height: 46px; padding: 10px 0 0 10px; color: #fff; font: bold 21px/26px ${TIMES}; }
`;
const Card = styled.div`
  height: 349px;
  padding: 11px 15px 0 15px;
  border-radius: 4px;
  background: #fff;
  box-shadow: 0 9px 18px -8px rgba(0, 0, 0, 0.35);
  color: #222;
  font: 13px/18px ${ARIAL};
  h3 { font-size: 16px; line-height: 20px; }
`;
const Line = styled.div`
  display: flex;
  align-items: ${(p) => p.$align || "center"};
  margin-top: ${(p) => p.$mt || 0}px;
`;
const Cell = styled.div`
  width: ${(p) => p.$w}px;
  flex: none;
`;
const Input = styled.div`
  width: ${(p) => p.$w}px;
  height: 28px;
  flex: none;
  padding-left: 5px;
  border: 1px solid #d6d6d6;
  background: #fff;
  color: ${(p) => (p.$ph ? "#a9a9a9" : "#666")};
  font: 13px/26px ${ARIAL};
`;
const Select = styled.div`
  display: flex;
  justify-content: space-between;
  align-items: center;
  width: ${(p) => p.$w}px;
  height: 28px;
  flex: none;
  margin-right: ${(p) => p.$mr || 0}px;
  padding: 0 6px 0 9px;
  border: 1px solid #d2d2d2;
  background: #dcdcdc;
  color: #777;
  font: 13px/26px ${ARIAL};
  &::after { content: ""; border: 3.500px solid transparent; border-top: 7px solid #000; border-bottom: 0; }
`;
const Rule = styled.hr`
  height: 1px;
  margin: 15px 0 13px;
  border: 0;
  background: #cfe8f5;
`;
const Search = styled.div`
  width: 125px;
  height: 42px;
  margin: -11px 0 0 auto;
  border-radius: 4px;
  background: linear-gradient(#5cc85a, #1f923c);
  color: #fff;
  text-align: center;
  text-shadow: 0 -1px 1px rgba(0, 60, 0, 0.5);
  font: bold 20px/42px ${TIMES};
`;
const Perks = styled.ul`
  margin: 14px 0 0;
  padding: 0 0 0 15px;
  list-style: none;
  color: #fff;
  font: 11px/19px ${ARIAL};
  li { display: flex; align-items: center; gap: 9px; height: 19px; }
`;
const Offers = styled.section`
  width: 327px;
  height: 560px;
  margin: -1px 0 0 19px;
  padding: 8px 15px 0;
  border: 1px solid #f2f2f2;
  border-radius: 5px;
  background: #fefefe;
  color: #222;
  h2 { height: 35px; border-bottom: 1px solid ${BLUE}; font: bold 21px/28px ${TIMES}; }
  h3 { font: bold 16px/20px ${ARIAL}; margin: 9px 0 0; }
`;
const Offer = styled.div`
  display: flex;
  justify-content: flex-end;
  align-items: baseline;
  gap: 3px;
  height: 26px;
  color: #666;
  font: 12px/26px ${ARIAL};
  b { color: #ff7038; font-size: 16px; }
`;
const OffersGap = styled.div`height: 8px;`;
const StatusBubble = styled.div`
  position: absolute;
  left: 0;
  bottom: 0;
  width: 432px;
  height: 23px;
  padding-left: 3px;
  border: 1px solid #c5c3c0;
  border-width: 1px 1px 0 0;
  border-radius: 0 4px 0 0;
  background: #f2f1f0;
  color: #4c4c4c;
  font: 14.500px/22px ${UI};
`;
const ABROAD = [["140", "22"], ["427", "16"], ["131", "16"], ["54", "16"], ["41", "22"], ["84", "9"], ["111", "17"], ["60", "9"], ["55", "14"], ["195", "15"], ["146", "35"], ["363", "33"], ["480", "9"]];
const HOME = [["33", "12.75"], ["11", "27.2"]];
const OfferRow = ({ n, price }) => <Offer><Fit w={84 + n.length * 6.600}>{n} viešbučiai nuo</Fit><b>{price} €</b></Offer>;

const Logo = () => (
  <svg width="52" height="76" viewBox="0 0 52 76" fill="none" stroke={BLUE} strokeWidth="3" overflow="visible">
    <g transform="translate(-.5 0)">
      <circle cx="25" cy="50.500" r="22.500" /><ellipse cx="25" cy="50.500" rx="11.500" ry="22.500" /><path d="M25 28v45M2.500 50.500h45M6 38q19 7 38 0M6 63q19-7 38 0" />
      <path d="M23 27q1-10-5-18 8 6 8 18zM29 28q-1-8 3-12-1 6 0 12z" fill={BLUE} strokeWidth="1.500" />
      <path d="M17 9Q12 0 5 2l3 2-3 3 5 0-4 6 5-2-1 6 6-8 3 8 1-7 6 4-2-6 6 1-5-4 4-3-7 1 0-4z" fill={BLUE} strokeWidth="0" />
      <path d="M32 18l-6-3 4-1 0-3 3 3 4-2-1 3 4 2-4 1 1 4-3-3-4 4z" fill={BLUE} strokeWidth="0" />
      <path d="M38 27L43 9Q47 2 55 4q7 4 6 12-2 6-8 8z" fill={ORANGE} stroke="none" /><circle cx="52" cy="14" r="5.800" fill="#fff" stroke="none" />
    </g>
  </svg>
);
const Waves = () => (
  <svg width="1286" height="108" viewBox="0 0 1286 108" preserveAspectRatio="none">
    <defs>
      <linearGradient id="w1"><stop offset="0" stopColor="#fff" /><stop offset=".6" stopColor="#ebf6fe" /><stop offset="1" stopColor="#f8fcff" /></linearGradient>
      <linearGradient id="w2" x1="0" y1="1" x2="1" y2="0"><stop offset="0" stopColor="#d8effd" stopOpacity=".4" /><stop offset=".5" stopColor="#b5e2fb" /><stop offset="1" stopColor="#e8f5fe" stopOpacity=".3" /></linearGradient>
    </defs>
    <path d="M0 0h1286v108H0z" fill="#fdfeff" />
    <path d="M0 90Q200 60 420 50 600 20 740 0h320q150 20 226 70v38H0z" fill="url(#w1)" />
    <path d="M330 108Q400 70 560 35 680 5 730 0h50Q620 30 540 60 470 85 430 108z" fill="url(#w2)" />
    <path d="M430 108Q470 80 560 48 660 15 760 0h150q-60 25-90 55-30 30-45 53z" fill="#f4fafe" />
    <path d="M460 50q120-20 260-47" stroke="#c4e8fb" strokeWidth="2" fill="none" />
    <path d="M775 108q25-30 50-60 40-43 130-48" stroke="#9bd6f6" strokeWidth="1.500" fill="none" />
    <path d="M560 108q130-30 310 0z" fill="#d6edfb" opacity=".7" />
  </svg>
);
const Cal = () => (
  <svg width="18" height="17" viewBox="0 0 18 17"><path d="M0 0h18v17H0z" fill="#fff" stroke="#ccc" /><path d="M2 1.500h14v3H2z" fill="#43b13e" /><path d="M2 7.500h14M2 10.500h14M2 13.500h14" stroke="#3b8fe0" strokeWidth="2" strokeDasharray="2 1" /><path d="M11 9.500h2v2h-2z" fill="#000" /></svg>
);

function TravelSite() {
  return (
    <Site>
      <SiteHead>
        <Waves />
        <HeadRow>
          <Brand>
            <Logo />
            <div><Fit w={138}>Pogosti.</Fit><b><Fit w={40}>eu</Fit></b></div>
          </Brand>
          <Contacts>
            <strong><Fit w={119}>Бронировать</Fit></strong>
            <div><Fit w={169}>Телефон +370 5 2403340</Fit></div>
            <div><Fit w={243}>Мобильный телефон +370 68678685</Fit></div>
            <a>
              <svg width="16" height="12" viewBox="0 0 16 12"><path d="M0 0h16v12H0z" fill={BLUE} /><path d="M1 1l7 6 7-6M1 11l5-5M15 11l-5-5" fill="none" stroke="#cfe8fa" /></svg>
              <Fit w={97}>Напишите нам</Fit>
            </a>
          </Contacts>
        </HeadRow>
      </SiteHead>
      <SiteNav>
        <NavCell $w={144} />
        <NavCell $w={623} $hot><Fit w={196}>Отели, СПА и санатории</Fit></NavCell>
        <NavCell $w={376}><Fit w={101}>Авиабилеты</Fit></NavCell>
      </SiteNav>
      <Columns>
        <PhoneRail>
          <div>+370 (652) 12 111 +370 (652) 12 111</div>
          <svg width="20" height="16" viewBox="0 0 20 16"><path d="M0 10l4-1 2 2q5 1 8-2l0-3 4-2 1 3q-1 8-11 8-7 1-8-5z" fill={BLUE} /><path d="M5 5q2-4 6-2M7 7q1-2 4-1" fill="none" stroke={BLUE} strokeWidth="1.200" /></svg>
        </PhoneRail>
        <Form>
          <h2><Fit w={147}>JŪSŲ KELIONĖ</Fit></h2>
          <Card>
            <h3><Fit w={155}>Kelionės informacija</Fit></h3>
            <Line $mt={8}><Fit w={228}>Miestas (įveskite arba išsirinkite iš sąrašo)</Fit></Line>
            <Line $mt={4}><Input $w={514} $ph><Fit w={179}>pvz. miesto ir šalies pavadinimas</Fit></Input></Line>
            <Line $mt={13}><Cell $w={130}><Fit w={55}>Atvykimas</Fit></Cell><Fit w={53}>Išvykimas</Fit></Line>
            <Line $mt={5}>
              <Input $w={78}><Fit w={64}>2014-10-18</Fit></Input><Space $w={7} /><Cal /><Space $w={27} />
              <Input $w={78}><Fit w={64}>2014-10-23</Fit></Input><Space $w={7} /><Cal />
            </Line>
            <Line $mt={14}><h3><Fit w={80}>Keliautojai</Fit></h3></Line>
            <Line $mt={9}><Cell $w={140}><Fit w={46}>Numeris</Fit></Cell><Cell $w={70}><Fit w={43}>Suaugę</Fit></Cell><Fit w={34}>Vaikai</Fit></Line>
            <Line $mt={5}>
              <Select $w={60} $mr={44}>1</Select><Fit w={26}>Nr. 1</Fit><Space $w={10} /><Select $w={60} $mr={10}>2</Select><Select $w={60}><Fit w={27}>Nėra</Fit></Select>
            </Line>
            <Rule />
            <Line><Fit w={38}>Valiuta</Fit></Line>
            <Line $mt={5} $align="flex-start">
              <Select $w={115} $mr={11}>€</Select>
              <svg width="23" height="28" viewBox="0 0 23 28"><path d="M0 5h23v6H0z" fill="#fbe04a" /><path d="M0 11h23v6H0z" fill="#4c9150" /><path d="M0 17h23v5H0z" fill="#d8322d" /><path d="M0 5h23v3H0z" fill="#fff" opacity=".35" /></svg>
              <Space $w={10} /><Select $w={55}>LT</Select>
              <Search><Fit w={84}>IEŠKOTI</Fit></Search>
            </Line>
          </Card>
          <Perks>
            {[["Sistemoje yra virš 300 000 viešbučių", 178], ["Patrauklios kainos kur be keliautum", 172], ["Momentinis patvirtinimas", 118]].map(([t, w]) => (
              <li key={t}><svg width="13" height="10" viewBox="0 0 13 10"><path d="M1.500 4.500L5 8l6.500-6.500" fill="none" stroke="#fff" strokeWidth="3" /></svg><Fit w={w}>{t}</Fit></li>
            ))}
          </Perks>
        </Form>
        <Offers>
          <h2><Fit w={230}>GERIAUSI PASIŪLYMAI</Fit></h2>
          <h3><Fit w={138}>Kurortai užsienyje</Fit></h3>
          {ABROAD.map(([n, price]) => <OfferRow key={n} n={n} price={price} />)}
          <OffersGap />
          <h3><Fit w={136}>Kurortai Lietuvoje</Fit></h3>
          {HOME.map(([n, price]) => <OfferRow key={n} n={n} price={price} />)}
        </Offers>
      </Columns>
    </Site>
  );
}

export default function App() {
  return (
    <Desktop>
      <Global />
      <Monitor $w={1920} $h={1080}>
        <Panel><span /><PanelTray /></Panel>
        <MonitorBody>
          <Launcher items={DOCK_LEFT} />
          <FilesWin>
            <FilesBar>
              <BarButton $w={33} $r="5px 0 0 5px"><svg width="8" height="12" viewBox="0 0 8 12"><path d="M7 1L1.500 6 7 11" fill="none" stroke="#a5a29a" strokeWidth="1.800" /></svg></BarButton>
              <BarButton $w={33} $r="0 5px 5px 0"><svg width="8" height="12" viewBox="0 0 8 12"><path d="M1 1l5.500 5L1 11" fill="none" stroke="#a5a29a" strokeWidth="1.800" /></svg></BarButton>
              <BarButton $w={72} $ml={9} $on><svg width="15" height="13" viewBox="0 0 15 13"><path d="M7.500 0L0 7h2.500v6H6V8.500h3V13h3.500V7H15z" fill="#c5c2ba" /></svg><Fit w={41}>Home</Fit></BarButton>
              <Grow />
              <BarButton $w={32}><svg width="15" height="15" viewBox="0 0 15 15"><circle cx="6" cy="6" r="4.500" fill="none" stroke="#c5c2ba" strokeWidth="2" /><path d="M9 9l5 5" stroke="#c5c2ba" strokeWidth="2.500" /></svg></BarButton>
              <BarButton $w={33} $ml={10} $r="5px 0 0 5px"><svg width="10" height="14" viewBox="0 0 10 14"><path d="M0 1h10M0 7h10M0 13h10" stroke="#d5d2ca" strokeWidth="2.200" /></svg></BarButton>
              <BarButton $w={33} $r="0 5px 5px 0" $on><svg width="11" height="10" viewBox="0 0 11 10"><path d="M0 1h11M0 5h11M0 9h11" stroke="#d5d2ca" strokeWidth="2" strokeDasharray="2 2.400" /></svg></BarButton>
            </FilesBar>
            <FilesBody>
              <Sidebar>
                {PLACES.map((g, i) => (
                  <React.Fragment key={g.head}>
                    <PlaceHead $first={i === 0}><Fit w={g.w}>{g.head}</Fit></PlaceHead>
                    {g.items.map(([name, w]) => (
                      <Place key={name} $on={name === "Home"}>
                        <svg width="16" height="16" viewBox="0 0 16 16">{PLACE_ICONS[name]}</svg>
                        <Fit w={w}>{name}</Fit>
                      </Place>
                    ))}
                  </React.Fragment>
                ))}
              </Sidebar>
              <IconView>
                <FolderRow>
                  <svg width="46" height="40" viewBox="0 0 46 40"><rect x=".5" y=".5" width="45" height="39" rx="2" fill="#8a3590" stroke="#7a7a5c" /><path d="M1 1h44v5H1z" fill="#dedcc4" /><path d="M4 10h4l2 2v3H4z" fill="#eee" /></svg>
                  {Array.from({ length: 9 }, (_, i) => <Folder key={i} />)}
                </FolderRow>
                <Strip>
                  {STRIP.map((f, i) => (
                    <FileCell key={i} $gap={f.gap} $mb={f.mb}>
                      {f.icon && <svg width="22" height={f.h} viewBox={`0 0 22 ${f.h}`}>{EDGE[f.icon](f.h)}</svg>}
                      {f.lines.map(([t, w]) => <div key={t}><Fit w={w}>{t}</Fit></div>)}
                    </FileCell>
                  ))}
                </Strip>
                <BottomRow>
                  <BottomCell><Thumb /></BottomCell><BottomCell><Thumb red /></BottomCell><BottomCell><Code /></BottomCell>
                  <BottomCell><Report /></BottomCell><BottomCell><Report /></BottomCell>
                  {Array.from({ length: 5 }, (_, i) => <BottomCell key={i}><Sheet /></BottomCell>)}
                </BottomRow>
                <Selected><Fit w={324}>“IMG_17102014_175115.png” selected  (160,5 kB)</Fit></Selected>
              </IconView>
              <ScrollMark />
            </FilesBody>
          </FilesWin>
        </MonitorBody>
        <ImageViewer />
      </Monitor>
      <Monitor $w={1366} $h={768}>
        <Panel>
          <PanelTitle><Fit w={483}>Туристическое агентство | Размещение на сайте - Google Chrome</Fit></PanelTitle>
          <PanelTray />
        </Panel>
        <MonitorBody>
          <Launcher items={DOCK_RIGHT} />
          <Browser>
            <TabBar>
              <svg width="34" height="24" viewBox="0 0 34 24"><path d="M9 8q0-8 4-8l4 1 4-1q4 0 4 8 4 1 4 2-12 4-24 0 0-1 4-2z" fill="#c9c8c5" /><path d="M9 7q8 3 16 0" stroke="#4f4b43" strokeWidth="2" fill="none" /><path d="M0 24q1-7 5-8l-3-4 6 1h18l6-1-3 4q4 1 5 8z" fill="#c9c8c5" /><path d="M9 15h16l-1 4q-4 2-6-2h-2q-2 4-6 2z" fill="#26241f" /></svg>
              <ActiveTab>
                <svg width="12" height="14" viewBox="0 0 12 14"><path d="M2 1Q0 9 9 12" fill="none" stroke="#d8b9ae" strokeWidth="2" /></svg>
                <Space $w={8} /><FadeText><Fit w={137}>Туристическое агент</Fit></FadeText><Space $w={8} /><Cross s={9} />
              </ActiveTab>
              <NewTab $w={26} $h={14} $c="#a3a19c" />
            </TabBar>
            <Tools>
              <Chevron w={11} h={18} /><Space $w={21} /><Chevron flip c="#d3d1ce" w={11} h={18} /><Space $w={13} />
              <svg width="18" height="18" viewBox="0 0 18 18"><circle cx="9" cy="9" r="8.700" fill="#c9252d" /><path d="M1.500 7a8 8 0 0 1 15 0z" fill="#ea8a8a" opacity=".6" /><path d="M6 6l6 6M12 6l-6 6" stroke="#fff" strokeWidth="2.200" /></svg>
              <Space $w={10} />
              <UrlBox $h={27} $pl={7} $pr={3} $fs={15.5}><Doc s={1.25} /><Space $w={7} /><Fit w={75}>pogosti.eu</Fit><Grow /><Star s={18} /></UrlBox>
              <Space $w={13} /><Menu s={13} />
            </Tools>
            <PageWithBar>
              <TravelSite />
              <Scroll $w={15}><Arrow /><Thumbbar $w={11} $h={381} $t={32} /><Arrow $down /></Scroll>
            </PageWithBar>
            <StatusBubble><Fit w={247}>Waiting for hotel-booking.abktravel.lt...</Fit></StatusBubble>
          </Browser>
        </MonitorBody>
      </Monitor>
    </Desktop>
  );
}
